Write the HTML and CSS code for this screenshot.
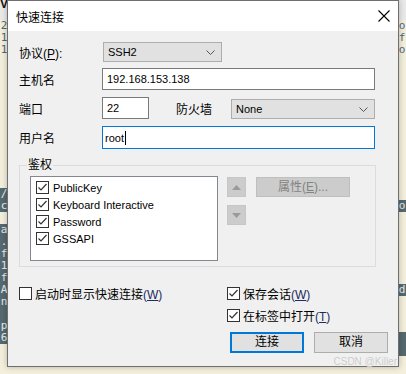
FILE: index.html
```html
<!DOCTYPE html>
<html lang="zh-CN">
<head>
    <meta charset="UTF-8">
    <title>快速连接</title>
    <link rel="stylesheet" href="styles.css">
</head>
<body>
<div class="desktop">
    <!-- terminal behind the dialog -->
    <div class="terminal">
        <div class="topbar"><span class="topbar-text">Ve</span></div>
        <div class="line"><span>2</span><span>o</span></div>
        <div class="line"><span>1</span><span>f</span></div>
        <div class="line"><span>1</span><span>o</span></div>
        <div class="line"></div>
        <div class="line"></div>
        <div class="line"></div>
        <div class="line"></div>
        <div class="line"></div>
        <div class="line"></div>
        <div class="line"></div>
        <div class="line"></div>
        <div class="line"></div>
        <div class="line"></div>
        <div class="line"></div>
        <div class="line"><span class="dark">/</span><span></span></div>
        <div class="line"><span class="dark">c</span><span class="dark">o</span></div>
        <div class="line"></div>
        <div class="line"><span class="dark">a</span><span></span></div>
        <div class="line"><span class="dark">.</span><span></span></div>
        <div class="line"><span class="dark">f</span><span></span></div>
        <div class="line"><span class="dark">1</span><span></span></div>
        <div class="line"><span class="dark">f</span><span></span></div>
        <div class="line"><span class="dark">A</span><span class="dark">d</span></div>
        <div class="line"><span class="dark">n</span><span></span></div>
        <div class="line"><span class="dark">&nbsp;</span><span></span></div>
        <div class="line"><span class="dark">p</span><span></span></div>
        <div class="line"><span class="dark">6</span><span class="dark">&nbsp;</span></div>
        <div class="line"><span></span><span class="dark">&nbsp;</span></div>
    </div>

    <!-- quick connect dialog -->
    <div class="dialog">
        <div class="titlebar">
            <span class="title">快速连接</span>
            <svg class="close" width="12" height="12" viewBox="0 0 12 12">
                <path d="M0.5 0.5 L11.5 11.5 M11.5 0.5 L0.5 11.5" stroke="#000" stroke-width="1.1" fill="none"/>
            </svg>
        </div>

        <div class="dialog-body">
            <div class="row row-protocol">
                <span class="label">协议(<u>P</u>):</span>
                <div class="select select-protocol">
                    <span class="value">SSH2</span>
                    <svg class="chevron" width="9" height="5" viewBox="0 0 9 5"><path d="M0.5 0.5 L4.5 4.5 L8.5 0.5" stroke="#555" fill="none"/></svg>
                </div>
            </div>
            <div class="row row-host">
                <span class="label">主机名</span>
                <div class="input input-host"><span class="value">192.168.153.138</span></div>
            </div>
            <div class="row row-port">
                <span class="label">端口</span>
                <div class="input input-port"><span class="value">22</span></div>
                <span class="label label-firewall">防火墙</span>
                <div class="select select-firewall">
                    <span class="value">None</span>
                    <svg class="chevron" width="9" height="5" viewBox="0 0 9 5"><path d="M0.5 0.5 L4.5 4.5 L8.5 0.5" stroke="#555" fill="none"/></svg>
                </div>
            </div>
            <div class="row row-user">
                <span class="label">用户名</span>
                <div class="input input-user focused"><span class="value">root</span><span class="caret"></span></div>
            </div>

            <div class="group">
                <span class="group-title">鉴权</span>
                <div class="auth-list">
                    <div class="auth-item"><span class="check on"></span><span>PublicKey</span></div>
                    <div class="auth-item"><span class="check on"></span><span>Keyboard Interactive</span></div>
                    <div class="auth-item"><span class="check on"></span><span>Password</span></div>
                    <div class="auth-item"><span class="check on"></span><span>GSSAPI</span></div>
                </div>
                <div class="order-buttons">
                    <div class="arrow-btn">
                        <svg width="9" height="5" viewBox="0 0 9 5"><path d="M4.5 0 L9 5 L0 5 Z" fill="#9a9a9a"/></svg>
                    </div>
                    <div class="arrow-btn">
                        <svg width="9" height="5" viewBox="0 0 9 5"><path d="M0 0 L9 0 L4.5 5 Z" fill="#9a9a9a"/></svg>
                    </div>
                </div>
                <div class="props-btn">属性(<u>E</u>)...</div>
            </div>

            <div class="options">
                <div class="option"><span class="check"></span><span>启动时显示快速连接<span class="key">(<u>W</u>)</span></span></div>
                <div class="option"><span class="check on"></span><span>保存会话<span class="key">(<u>W</u>)</span></span></div>
                <div class="option empty"></div>
                <div class="option"><span class="check on"></span><span>在标签中打开<span class="key">(<u>T</u>)</span></span></div>
            </div>

            <div class="buttons">
                <div class="btn default">连接</div>
                <div class="btn">取消</div>
            </div>
        </div>
    </div>

    <div class="watermark">CSDN @Killer</div>
</div>
</body>
</html>
```

FILE: styles.css
```css
body {
    margin: 0;
    font-family: "Liberation Sans", "Noto Sans CJK SC", sans-serif;
    font-size: 12px;
    color: #000;
}

.desktop {
    position: relative;
    width: 406px;
    height: 374px;
    overflow: hidden;
    background: #f4efdc;
}

/* terminal in the background */
.terminal {
    font-family: "DejaVu Sans Mono", monospace;
    font-size: 11px;
    color: #50687a;
}
.topbar {
    height: 22px;
    background: #e9e9e9;
}
.topbar-text {
    display: block;
    font-family: "Liberation Sans", sans-serif;
    font-weight: bold;
    font-size: 12px;
    line-height: 12px;
    margin-top: -2px;
    color: #111;
}
.line {
    height: 12px;
    line-height: 12px;
    display: flex;
    justify-content: space-between;
}
.line span {
    width: 8px;
    text-align: center;
}
.line span.dark {
    background: #55696f;
    color: #e6ecee;
}

/* dialog window */
.dialog {
    position: absolute;
    left: 7px;
    top: 0;
    width: 392px;
    height: 367px;
    box-sizing: border-box;
    border: 1px solid #6f6f6f;
    background: #f0f0f0;
    box-shadow: 0 0 6px rgba(0,0,0,0.25);
}

.titlebar {
    height: 30px;
    background: #fff;
    display: flex;
    align-items: center;
    justify-content: space-between;
    padding: 0 8px 0 8px;
}
.title {
    font-size: 12px;
}
.close {
    margin-top: -1px;
}

.dialog-body {
    padding: 11px 10px 0 11px;
}

.row {
    display: flex;
    align-items: center;
}
.row .label {
    width: 83px;
    flex: none;
}
.row-host { margin-top: 6px; }
.row-port { margin-top: 7px; }
.row-user { margin-top: 7px; }

.value {
    font-size: 11px;
}

.select {
    box-sizing: border-box;
    height: 20px;
    background: #e1e1e1;
    border: 1px solid #adadad;
    display: flex;
    align-items: center;
    justify-content: space-between;
    padding: 0 6px 0 4px;
}
.select-protocol {
    width: 119px;
    margin-left: 1px;
}
.select-firewall {
    width: 144px;
    align-self: flex-end;
}

.input {
    box-sizing: border-box;
    height: 22px;
    background: #fff;
    border: 1px solid #7a7a7a;
    display: flex;
    align-items: center;
    padding-left: 4px;
}
.input-host {
    width: 273px;
}
.input-port {
    width: 47px;
}
.row .label-firewall {
    margin-left: 27px;
    width: 55px;
}
.input-user {
    width: 273px;
    height: 23px;
    padding-left: 2px;
}
.input.focused {
    border-color: #0078d7;
}
.caret {
    width: 1px;
    height: 14px;
    background: #000;
    margin-left: 1px;
}

/* authentication group */
.group {
    position: relative;
    box-sizing: border-box;
    width: 357px;
    height: 102px;
    margin-top: 16px;
    border: 1px solid #dcdcdc;
    padding: 10px 0 0 10px;
    display: flex;
    align-items: flex-start;
}
.group-title {
    position: absolute;
    left: 7px;
    top: -9px;
    padding: 0 1px;
    line-height: 16px;
    background: #f0f0f0;
}

.auth-list {
    box-sizing: border-box;
    width: 188px;
    height: 85px;
    background: #fff;
    border: 1px solid #828790;
    padding: 2px 0 0 5px;
}
.auth-item {
    height: 17px;
    display: flex;
    align-items: center;
    gap: 4px;
    font-size: 11px;
}

.check {
    box-sizing: border-box;
    width: 13px;
    height: 13px;
    flex: none;
    border: 1px solid #333;
    background: #fff;
}
.check.on {
    background: #fff url("data:image/svg+xml,%3Csvg xmlns='http://www.w3.org/2000/svg' width='11' height='11'%3E%3Cpath d='M1.5 5.5 L4 8 L9.5 2' stroke='%23333' stroke-width='1.2' fill='none'/%3E%3C/svg%3E") no-repeat center;
}

.order-buttons {
    display: flex;
    flex-direction: column;
    gap: 8px;
    margin: 1px 0 0 9px;
}
.arrow-btn {
    box-sizing: border-box;
    width: 19px;
    height: 20px;
    background: #cccccc;
    border: 1px solid #c6c6c6;
    display: flex;
    align-items: center;
    justify-content: center;
}

.props-btn {
    box-sizing: border-box;
    width: 94px;
    height: 20px;
    margin: 1px 0 0 10px;
    background: #cccccc;
    border: 1px solid #bfbfbf;
    color: #838383;
    text-align: center;
    line-height: 18px;
}

/* bottom options */
.options {
    display: grid;
    grid-template-columns: 208px 1fr;
    grid-auto-rows: 22px;
    margin-top: 15px;
}
.option {
    display: flex;
    align-items: center;
    gap: 3px;
}
.key {
    color: #1c2a5e;
}

.buttons {
    display: flex;
    justify-content: flex-end;
    gap: 10px;
    margin-top: 6px;
}
.btn {
    box-sizing: border-box;
    width: 74px;
    height: 21px;
    background: #e1e1e1;
    border: 1px solid #adadad;
    text-align: center;
    line-height: 19px;
}
.btn.default {
    border: 2px solid #0078d7;
    line-height: 17px;
}

.watermark {
    position: absolute;
    right: 9px;
    bottom: 7px;
    font-size: 10px;
    color: #c9c9c9;
    text-shadow: 0 0 1px #fff;
}
```
